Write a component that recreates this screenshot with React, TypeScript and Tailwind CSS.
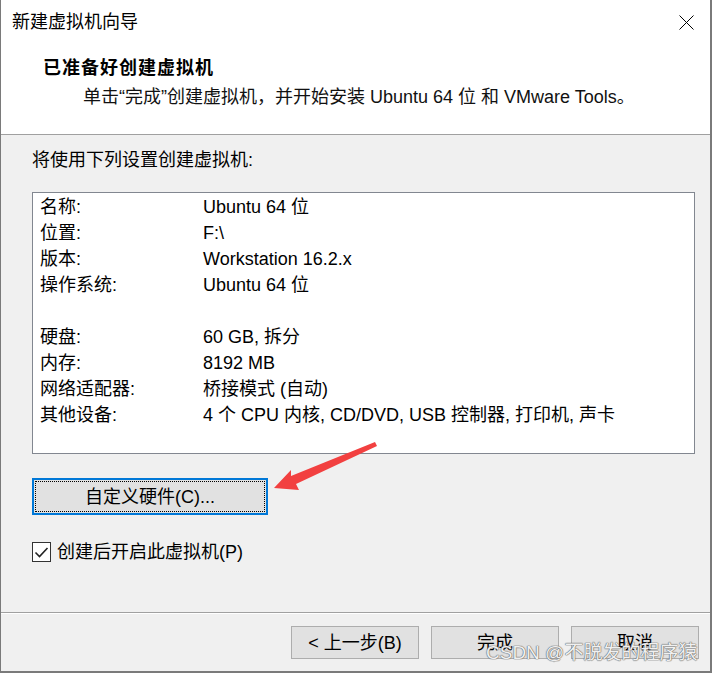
import React from "react";

const rows: [string, string][] = [
  ["名称:", "Ubuntu 64 位"],
  ["位置:", "F:\\"],
  ["版本:", "Workstation 16.2.x"],
  ["操作系统:", "Ubuntu 64 位"],
  ["", ""],
  ["硬盘:", "60 GB, 拆分"],
  ["内存:", "8192 MB"],
  ["网络适配器:", "桥接模式 (自动)"],
  ["其他设备:", "4 个 CPU 内核, CD/DVD, USB 控制器, 打印机, 声卡"],
];

export default function App() {
  return (
    <div className="relative w-[712px] h-[673px] flex flex-col bg-[#f0f0f0] border-l border-r-2 border-b-2 border-[#7a7a7a] text-black text-[18px] font-['Liberation_Sans','Noto_Sans_CJK_SC',sans-serif] overflow-hidden">
      {/* Header */}
      <div className="bg-white border-b border-[#a0a0a0] h-[135px] flex flex-col">
        <div className="h-[44px] flex items-center justify-between pl-[11px] pr-[16px]">
          <span className="leading-[24px]">新建虚拟机向导</span>
          <svg width="15" height="15" viewBox="0 0 15 15">
            <path d="M0.5 0.5 L14.5 14.5 M14.5 0.5 L0.5 14.5" stroke="#000" strokeWidth="1" fill="none" />
          </svg>
        </div>
        <div className="mt-[12px] pl-[42px] font-bold leading-[24px] tracking-[1px]">已准备好创建虚拟机</div>
        <div className="mt-[5px] pl-[82px] leading-[24px] text-[#111]">
          单击“完成”创建虚拟机，并开始安装 Ubuntu 64 位 和 VMware Tools。
        </div>
      </div>

      {/* Body */}
      <div className="flex-1 flex flex-col pl-[31px]">
        <div className="mt-[13px] leading-[24px]">将使用下列设置创建虚拟机:</div>
        <div className="mt-[20px] w-[663px] h-[262px] bg-white border border-[#828790] pt-[1px] pl-[7px]">
          {rows.map(([k, v], i) => (
            <div key={i} className="flex h-[26px] items-center leading-[26px]">
              <span className="w-[163px] shrink-0">{k}</span>
              <span className="whitespace-nowrap">{v}</span>
            </div>
          ))}
        </div>
        <div className="relative mt-[24px] w-[236px] h-[37px] bg-[#e1e1e1] border-2 border-[#0078d7] flex items-center justify-center">
          <div className="absolute inset-[1px] border border-dotted border-black"></div>
          <span className="leading-[24px]">自定义硬件(C)...</span>
        </div>
        <div className="mt-[27px] flex items-center h-[20px]">
          <div className="w-[19px] h-[20px] bg-white border border-[#333] flex items-center justify-center">
            <svg width="15" height="13" viewBox="0 0 15 13">
              <path d="M1.5 6.5 L5.5 10.5 L13.5 2" stroke="#222" strokeWidth="1.6" fill="none" />
            </svg>
          </div>
          <span className="ml-[6px] leading-[24px]">创建后开启此虚拟机(P)</span>
        </div>
      </div>

      {/* Footer */}
      <div className="h-[59px] border-t border-[#a0a0a0] flex flex-col">
        <div className="h-px bg-white"></div>
        <div className="mt-[12px] flex justify-end gap-[12px] pr-[11px]">
          <div className="w-[128px] h-[33px] bg-[#e1e1e1] border border-[#adadad] flex items-center justify-center leading-[24px]">
            &lt; 上一步(B)
          </div>
          <div className="w-[128px] h-[33px] bg-[#e1e1e1] border border-[#adadad] flex items-center justify-center leading-[24px]">
            完成
          </div>
          <div className="w-[128px] h-[33px] bg-[#e1e1e1] border border-[#adadad] flex items-center justify-center leading-[24px]">
            取消
          </div>
        </div>
      </div>

      {/* Watermark */}
      <div className="absolute left-[485px] top-[641px] text-[19px] leading-[24px] text-white/90 whitespace-nowrap [text-shadow:0_0_1px_#666,0_0_1px_#666,0_0_1px_#666]">
        CSDN @不脱发的程序猿
      </div>

      {/* Red arrow */}
      <svg className="absolute left-0 top-0 pointer-events-none" width="712" height="673" viewBox="0 0 712 673">
        <polygon
          points="273,488 290,470 290,476 374,442 376,446 295,484 298,490"
          fill="#f24040"
        />
      </svg>
    </div>
  );
}
